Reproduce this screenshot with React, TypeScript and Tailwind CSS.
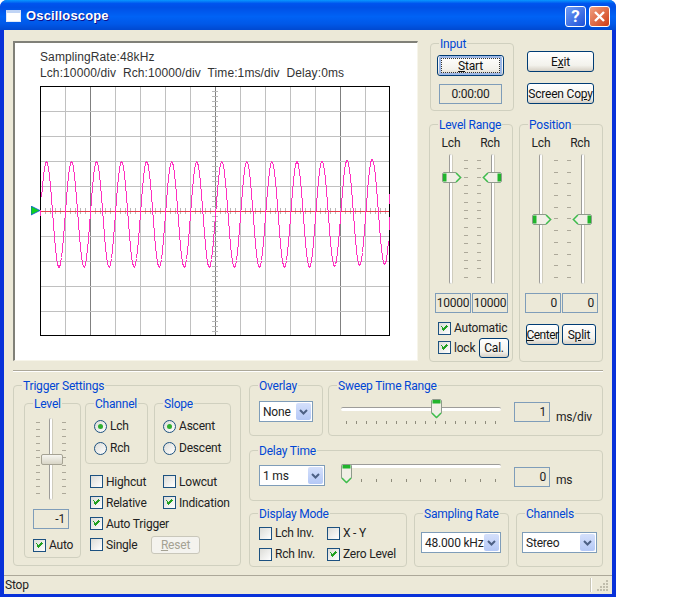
import React from "react";

const wave = (() => {
  const pts: string[] = [];
  for (let x = 1; x < 349; x += 1) {
    const ax = x + 40;
    const drift = ax > 300 ? -((ax - 300) / 90) * 3 : 0;
    const y = 214 + drift - 53 * Math.cos((2 * Math.PI * (ax - 46)) / 25.05);
    pts.push(`${x + 0.5},${Math.round(y - 86) + 0.5}`);
  }
  return pts.join(" ");
})();

function Scope() {
  const vs = Array.from({ length: 13 }, (_, i) => 25 * (i + 1));
  const hs = Array.from({ length: 9 }, (_, i) => 25 * (i + 1));
  const tickX = Array.from({ length: 69 }, (_, i) => 5 * (i + 1));
  const tickY = Array.from({ length: 49 }, (_, i) => 5 * (i + 1));
  return (
    <svg width="350" height="250" viewBox="0 0 350 250" shapeRendering="crispEdges" className="block bg-white">
      {vs.map((x) => (
        <line key={x} x1={x + 0.5} x2={x + 0.5} y1="0" y2="250" stroke={x === 50 || x === 175 || x === 300 ? "#808080" : "#c0c0c0"} />
      ))}
      {hs.map((y) => (
        <line key={y} x1="0" x2="350" y1={y + 0.5} y2={y + 0.5} stroke="#c0c0c0" />
      ))}
      {tickX.map((x) => (
        <line key={x} x1={x + 0.5} x2={x + 0.5} y1="122" y2="128" stroke="#b8b8b8" />
      ))}
      {tickY.map((y) => (
        <line key={y} x1="172" x2="178" y1={y + 0.5} y2={y + 0.5} stroke="#b8b8b8" />
      ))}
      <line x1="0" x2="350" y1="125.5" y2="125.5" stroke="#e83a4a" />
      <rect x="0.5" y="0.5" width="349" height="249" fill="none" stroke="#000" />
      <polyline points={wave} fill="none" stroke="#ff30c0" strokeWidth="1" strokeLinejoin="round" />
      <line x1="349.5" x2="349.5" y1="108" y2="118" stroke="#ff30c0" strokeWidth="1" />
      <line x1="349.5" x2="349.5" y1="131" y2="144" stroke="#ff30c0" strokeWidth="1" />
      <line x1="0.5" x2="0.5" y1="124" y2="130" stroke="#ff30c0" strokeWidth="1" />
    </svg>
  );
}

function Group({ label, className, children }: { label: string; className: string; children?: React.ReactNode }) {
  return (
    <div className={"relative rounded-[4px] border border-[#d0d0bf] " + className}>
      <span className="absolute left-[8px] top-[-7px] whitespace-nowrap bg-[#ece9d8] px-[1px] text-[12px] leading-[14px] text-[#0046d5]">
        {label}
      </span>
      {children}
    </div>
  );
}

function Btn({ className, children, focus, disabled }: { className: string; children: React.ReactNode; focus?: boolean; disabled?: boolean }) {
  const base = disabled
    ? "border-[#c9c7ba] text-[#a5a293] bg-[#f4f3ee]"
    : "border-[#003c74] text-[#111] bg-[linear-gradient(180deg,#ffffff_0%,#f3f2ec_70%,#d6d0c5_100%)]";
  return (
    <div className={"flex items-center justify-center whitespace-nowrap rounded-[3px] border text-[12px] " + base + " " + className}>
      {focus ? (
        <div className="m-[1px] flex h-full w-full items-center justify-center rounded-[2px] border-[2px] border-[#9db8e6]">
          <div className="flex h-full w-full items-center justify-center border border-dotted border-[#333]">{children}</div>
        </div>
      ) : (
        children
      )}
    </div>
  );
}

function Check({ on }: { on?: boolean }) {
  return (
    <div className="h-[13px] w-[13px] shrink-0 border border-[#1c5180] bg-[linear-gradient(135deg,#dcdcd7,#ffffff)]">
      {on && (
        <svg width="11" height="11" viewBox="0 0 11 11" shapeRendering="crispEdges" className="block">
          <path d="M2 4h1v3h1v1h1V7h1V6h1V5h1V4h1V3h-1v-1h-1v1h-1v1h-1v1h-1V4H3V3H2z" fill="#21a121" />
        </svg>
      )}
    </div>
  );
}

function CheckLabel({ on, label, className }: { on?: boolean; label: string; className?: string }) {
  return (
    <div className={"flex items-center gap-[3px] whitespace-nowrap text-[12px] leading-[14px] " + (className ?? "")}>
      <Check on={on} />
      <span>{label}</span>
    </div>
  );
}

function Radio({ on, label }: { on?: boolean; label: string }) {
  return (
    <div className="flex h-[22px] items-center gap-[3px] whitespace-nowrap text-[12px]">
      <div className="flex h-[13px] w-[13px] shrink-0 items-center justify-center rounded-full border border-[#1c5180] bg-[linear-gradient(135deg,#dcdcd7,#ffffff)]">
        {on && <div className="h-[5px] w-[5px] rounded-full bg-[#2fae2f]" />}
      </div>
      <span>{label}</span>
    </div>
  );
}

function Value({ className, children }: { className: string; children: React.ReactNode }) {
  return (
    <div className={"flex h-[20px] items-center border border-[#7f9db9] px-[3px] text-[12px] " + className}>{children}</div>
  );
}

function Select({ className, text }: { className: string; text: string }) {
  return (
    <div className={"flex h-[21px] items-center justify-between border border-[#7f9db9] bg-white pl-[3px] pr-[1px] text-[12px] " + className}>
      <span className="whitespace-nowrap">{text}</span>
      <div className="flex h-[17px] w-[15px] shrink-0 items-center justify-center rounded-[2px] bg-[linear-gradient(180deg,#d5e0fb,#b4c8f6)]">
        <svg width="9" height="6" viewBox="0 0 9 6">
          <path d="M1 1l3.5 3.5L8 1" fill="none" stroke="#4d6185" strokeWidth="2" />
        </svg>
      </div>
    </div>
  );
}

function Ticks({ n, className }: { n: number; className: string }) {
  return (
    <div className={"flex w-[4px] flex-col justify-between " + className}>
      {Array.from({ length: n }, (_, i) => (
        <div key={i} className="h-[1px] w-[4px] bg-[#aca899]" />
      ))}
    </div>
  );
}

function ThumbSide({ dir, className }: { dir: "r" | "l"; className: string }) {
  return (
    <svg width="20" height="11" viewBox="0 0 20 11" className={"absolute " + className}>
      <g transform={dir === "l" ? "matrix(-1 0 0 1 20 0)" : undefined}>
        <path d="M1.5.5H14L19 5.5L14 10.5H1.5L.5 9.5V1.5Z" fill="#f1efe6" stroke="#8f9a8c" />
        <path d="M1 1.5V9.5H4.5V1.5Z" fill="#21b42c" />
        <path d="M14 1L18.5 5.5L14 10" fill="none" stroke="#3cc24a" strokeWidth="1.4" />
      </g>
    </svg>
  );
}

function ThumbDown({ className }: { className: string }) {
  return (
    <svg width="11" height="20" viewBox="0 0 11 20" className={"absolute " + className}>
      <path d="M1.5.5H9.5L10.5 1.5V14L5.5 19L.5 14V1.5Z" fill="#f1efe6" stroke="#8f9a8c" />
      <path d="M1.5 1H9.5V4.5H1.5Z" fill="#21b42c" />
      <path d="M1 14L5.5 18.5L10 14" fill="none" stroke="#3cc24a" strokeWidth="1.4" />
    </svg>
  );
}

function VTrack() {
  return <div className="h-full w-[4px] rounded-full border-l border-r border-l-[#9d9c99] border-r-[#cfccbd] bg-white" />;
}

function DualSlider({ n, top, rightTop }: { n: number; top: string; rightTop: string }) {
  return (
    <div className="relative ml-[19px] mt-[4px] flex h-[130px]">
      <VTrack />
      <Ticks n={n} className="ml-[11px] mb-[6px] mt-[6px]" />
      <Ticks n={n} className="ml-[9px] mb-[6px] mt-[6px]" />
      <div className="ml-[10px] h-full">
        <VTrack />
      </div>
      <ThumbSide dir="r" className={"left-[-7px] " + top} />
      <ThumbSide dir="l" className={"left-[33px] " + rightTop} />
    </div>
  );
}

function ChLabels() {
  return (
    <div className="flex gap-[19px] pl-[11px] pt-[11px] text-[12px] leading-[14px]">
      <span className="w-[20px] text-center">Lch</span>
      <span className="w-[20px] text-center">Rch</span>
    </div>
  );
}

function HSlider({ n, thumb, tickGap }: { n: number; thumb: string; tickGap: string }) {
  return (
    <div className="relative mt-[13px] h-[28px] w-[160px]">
      <div className="mt-[8px] h-[4px] w-full rounded-full border-b border-t border-b-[#ffffff] border-t-[#9d9c99] bg-white" />
      <div className={"flex justify-between px-[5px] " + tickGap}>
        {Array.from({ length: n }, (_, i) => (
          <div key={i} className="h-[3px] w-[1px] bg-[#8f8c7c]" />
        ))}
      </div>
      <ThumbDown className={"top-0 " + thumb} />
    </div>
  );
}

export default function App() {
  return (
    <div className="h-[597px] w-[700px] overflow-hidden bg-white font-['Roboto',sans-serif] tracking-[-0.2px] text-[#222]">
      <div className="flex h-[597px] w-[616px] flex-col rounded-t-[7px] bg-[#0831d9]">
        {/* Title bar */}
        <div className="flex h-[30px] shrink-0 items-center rounded-t-[7px] bg-[linear-gradient(180deg,#0997ff_0%,#0053ee_12%,#0050e6_25%,#0062f5_55%,#0058e8_80%,#0049d0_100%)] pl-[6px] pr-[6px] pt-[2px]">
          <div className="h-[12px] w-[15px] border border-t-[3px] border-[#dfe8f8] border-t-[#c0d4f5] bg-white" />
          <span className="ml-[5px] font-['Liberation_Sans',sans-serif] text-[13px] font-bold tracking-[0.15px] text-white [text-shadow:1px_1px_#0f1089]">Oscilloscope</span>
          <div className="ml-auto flex gap-[3px]">
            <div className="flex h-[21px] w-[21px] items-center justify-center rounded-[3px] border border-white bg-[linear-gradient(135deg,#6f9cf5,#1c50d8)] text-[17px] font-bold leading-none text-white">?</div>
            <div className="flex h-[21px] w-[21px] items-center justify-center rounded-[3px] border border-white bg-[linear-gradient(135deg,#f0a080,#d03c14)]">
              <svg width="13" height="13" viewBox="0 0 13 13">
                <path d="M2 2l9 9M11 2l-9 9" stroke="#fff" strokeWidth="2.4" />
              </svg>
            </div>
          </div>
        </div>
        {/* Client */}
        <div className="mx-[4px] mb-[4px] flex flex-1 flex-col bg-[#ece9d8]">
          <div className="pl-[9px] pt-[11px]">
            <div className="flex h-[320px]">
              <div className="h-[320px] w-[405px] border-b border-l-2 border-r border-t-2 border-b-[#f7f5ea] border-l-[#808078] border-r-[#f7f5ea] border-t-[#808078] bg-white pl-[25px] font-['Liberation_Sans',sans-serif] text-[12px] leading-[16px] tracking-[0.1px] text-[#333]">
                <div className="relative pt-[6px]">
                  <div>SamplingRate:48kHz</div>
                  <div className="whitespace-pre">Lch:10000/div  Rch:10000/div  Time:1ms/div  Delay:0ms</div>
                  <div className="mt-[5px]">
                    <Scope />
                  </div>
                  <svg width="10" height="10" viewBox="0 0 10 10" className="absolute left-[-9px] top-[163px]">
                    <path d="M0 0L9 4.5L0 9Z" fill="#10d020" stroke="#0a50e0" strokeWidth="0.8" />
                  </svg>
                </div>
              </div>
              <div className="flex flex-col">
                <div className="mt-[2px] flex h-[68px]">
                  <Group label="Input" className="ml-[12px] h-[68px] w-[84px]">
                    <Btn focus className="ml-[6px] mt-[11px] h-[21px] w-[67px]">
                      <span><u>S</u>tart</span>
                    </Btn>
                    <Value className="ml-[8px] mt-[8px] w-[63px] justify-center">0:00:00</Value>
                  </Group>
                  <div className="ml-[13px] mt-[8px] flex w-[67px] flex-col gap-[11px]">
                    <Btn className="h-[21px] w-[67px]">
                      <span>E<u>x</u>it</span>
                    </Btn>
                    <Btn className="h-[21px] w-[67px]">
                      <span>Screen Co<u>p</u>y</span>
                    </Btn>
                  </div>
                </div>
                <div className="mt-[13px] flex">
                  <Group label="Level Range" className="ml-[11px] h-[238px] w-[84px]">
                    <ChLabels />
                    <DualSlider n={15} top="top-[18px]" rightTop="top-[18px]" />
                    <div className="ml-[5px] mt-[9px] flex gap-[1px]">
                      <Value className="w-[36px] justify-center !px-0">10000</Value>
                      <Value className="w-[36px] justify-center !px-0">10000</Value>
                    </div>
                    <div className="ml-[8px] mt-[8px]">
                      <CheckLabel on label="Automatic" />
                      <div className="mt-[3px] flex h-[19px] items-center">
                        <CheckLabel on label="lock" className="w-[41px]" />
                        <Btn className="h-[20px] w-[30px]">Cal.</Btn>
                      </div>
                    </div>
                  </Group>
                  <Group label="Position" className="ml-[6px] h-[238px] w-[84px]">
                    <ChLabels />
                    <DualSlider n={11} top="top-[60px]" rightTop="top-[60px]" />
                    <div className="ml-[5px] mt-[9px] flex gap-[1px]">
                      <Value className="w-[36px] justify-end">0</Value>
                      <Value className="w-[36px] justify-end">0</Value>
                    </div>
                    <div className="ml-[6px] mt-[11px] flex gap-[3px]">
                      <Btn className="h-[21px] w-[33px] tracking-[-0.5px]">
                        <span><u>C</u>enter</span>
                      </Btn>
                      <Btn className="h-[21px] w-[34px]">
                        <span>S<u>p</u>lit</span>
                      </Btn>
                    </div>
                  </Group>
                </div>
              </div>
            </div>
            <div className="mt-[9px] h-[2px] w-[590px] border-b border-t border-b-white border-t-[#aca899]" />
            <div className="mt-[13px] flex">
              {/* Trigger */}
              <Group label="Trigger Settings" className="flex h-[181px] w-[228px] gap-[4px] pl-[10px] pt-[17px]">
                <Group label="Level" className="h-[155px] w-[57px] shrink-0 pl-[8px] pt-[14px]">
                  <div className="relative flex h-[82px] w-[36px] justify-between px-[3px]">
                    <Ticks n={11} className="mb-[6px] mt-[4px]" />
                    <VTrack />
                    <Ticks n={11} className="mb-[6px] mt-[4px]" />
                    <div className="absolute left-[8px] top-[36px] h-[11px] w-[22px] rounded-[2px] border border-[#a5a293] bg-[linear-gradient(180deg,#f7f6f0,#d8d5c6)]" />
                  </div>
                  <Value className="mt-[9px] w-[36px] justify-end">-1</Value>
                  <CheckLabel on label="Auto" className="mt-[9px]" />
                </Group>
                <div>
                  <div className="flex gap-[6px]">
                    <Group label="Channel" className="h-[61px] w-[63px] pl-[8px] pt-[11px]">
                      <Radio on label="Lch" />
                      <Radio label="Rch" />
                    </Group>
                    <Group label="Slope" className="h-[61px] w-[77px] pl-[8px] pt-[11px]">
                      <Radio on label="Ascent" />
                      <Radio label="Descent" />
                    </Group>
                  </div>
                  <div className="ml-[5px] mt-[7px]">
                    <div className="grid h-[42px] grid-cols-[73px_80px] items-center">
                      <CheckLabel label="Highcut" />
                      <CheckLabel label="Lowcut" />
                      <CheckLabel on label="Relative" />
                      <CheckLabel on label="Indication" />
                    </div>
                    <div className="flex h-[21px] items-center">
                      <CheckLabel on label="Auto Trigger" />
                    </div>
                    <div className="flex h-[21px] items-center">
                      <CheckLabel label="Single" className="w-[61px]" />
                      <Btn disabled className="h-[18px] w-[49px]">
                        <span><u>R</u>eset</span>
                      </Btn>
                    </div>
                  </div>
                </div>
              </Group>
              {/* Right */}
              <div className="ml-[8px] flex w-[354px] flex-col">
                <div className="flex gap-[5px]">
                  <Group label="Overlay" className="h-[51px] w-[74px] pl-[9px] pt-[15px]">
                    <Select className="w-[54px]" text="None" />
                  </Group>
                  <Group label="Sweep Time Range" className="flex h-[51px] w-[275px] pl-[12px]">
                    <HSlider n={16} thumb="left-[90px]" tickGap="mt-[10px]" />
                    <Value className="ml-[13px] mt-[16px] w-[36px] justify-end">1</Value>
                    <span className="ml-[6px] mt-[24px] text-[12px] leading-[14px]">ms/div</span>
                  </Group>
                </div>
                <Group label="Delay Time" className="mt-[14px] flex h-[51px] w-[354px] pl-[9px]">
                  <div className="pt-[14px]">
                    <Select className="w-[66px]" text="1 ms" />
                  </div>
                  <div className="ml-[16px]">
                    <HSlider n={11} thumb="left-0" tickGap="mt-[11px]" />
                  </div>
                  <Value className="ml-[13px] mt-[16px] w-[36px] justify-end">0</Value>
                  <span className="ml-[6px] mt-[22px] text-[12px] leading-[14px]">ms</span>
                </Group>
                <div className="mt-[12px] flex">
                  <Group label="Display Mode" className="h-[54px] w-[158px] pl-[9px] pt-[12px]">
                    <div className="grid grid-cols-[68px_80px] gap-y-[7px]">
                      <CheckLabel label="Lch Inv." />
                      <CheckLabel label="X - Y" />
                      <CheckLabel label="Rch Inv." />
                      <CheckLabel on label="Zero Level" />
                    </div>
                  </Group>
                  <Group label="Sampling Rate" className="ml-[7px] h-[54px] w-[95px] pl-[6px] pt-[18px]">
                    <Select className="w-[80px]" text="48.000 kHz" />
                  </Group>
                  <Group label="Channels" className="ml-[7px] h-[54px] w-[87px] pl-[5px] pt-[18px]">
                    <Select className="w-[75px]" text="Stereo" />
                  </Group>
                </div>
              </div>
            </div>
          </div>
          {/* Status */}
          <div className="mt-[8px] flex flex-1 items-center border-t border-t-[#aca899] pl-[1px] pr-[1px] text-[12px]">
            <span>Stop</span>
            <div className="ml-auto flex h-[14px] items-center">
              <div className="h-full w-[2px] border-l border-r border-l-[#c8c5b5] border-r-white" />
              <svg width="19" height="14" viewBox="0 0 19 14" shapeRendering="crispEdges">
                <g fill="#c0bdac">
                  <rect x="14" y="2" width="2" height="2" />
                  <rect x="11" y="5" width="2" height="2" />
                  <rect x="14" y="5" width="2" height="2" />
                  <rect x="8" y="8" width="2" height="2" />
                  <rect x="11" y="8" width="2" height="2" />
                  <rect x="14" y="8" width="2" height="2" />
                  <rect x="5" y="11" width="2" height="2" />
                  <rect x="8" y="11" width="2" height="2" />
                  <rect x="11" y="11" width="2" height="2" />
                  <rect x="14" y="11" width="2" height="2" />
                </g>
              </svg>
            </div>
          </div>
        </div>
      </div>
    </div>
  );
}
